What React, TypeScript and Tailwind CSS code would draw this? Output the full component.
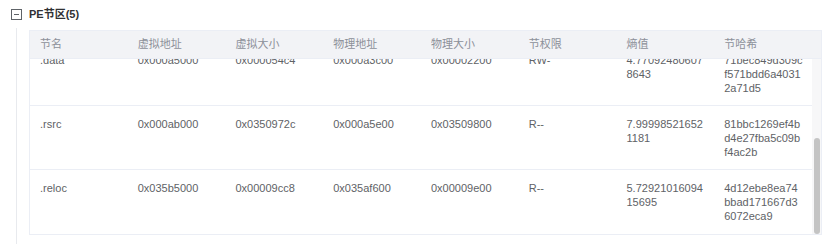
import { useLayoutEffect, useRef } from "react";

type Section = {
  name: string;
  vaddr: string;
  vsize: string;
  paddr: string;
  psize: string;
  perm: string;
  entropy: string;
  hash: string;
};

const columns = ["节名", "虚拟地址", "虚拟大小", "物理地址", "物理大小", "节权限", "熵值", "节哈希"];

const sections: Section[] = [
  {
    name: ".text",
    vaddr: "0x00001000",
    vsize: "0x0008b2f6",
    paddr: "0x00000400",
    psize: "0x0008b400",
    perm: "R-X",
    entropy: "6.48213570921",
    hash: "3e9c0a7f12bd45e8c6a01f9d27b3c8e4",
  },
  {
    name: ".rdata",
    vaddr: "0x0008d000",
    vsize: "0x00017a3e",
    paddr: "0x0008b800",
    psize: "0x00017c00",
    perm: "R--",
    entropy: "5.10384726153",
    hash: "a0d7e15c93f24b6812ce7f90d4b5a1c3",
  },
  {
    name: ".data",
    vaddr: "0x000a5000",
    vsize: "0x000054c4",
    paddr: "0x000a3c00",
    psize: "0x00002200",
    perm: "RW-",
    entropy: "4.770924806078643",
    hash: "71bec849d309cf571bdd6a40312a71d5",
  },
  {
    name: ".rsrc",
    vaddr: "0x000ab000",
    vsize: "0x0350972c",
    paddr: "0x000a5e00",
    psize: "0x03509800",
    perm: "R--",
    entropy: "7.999985216521181",
    hash: "81bbc1269ef4bd4e27fba5c09bf4ac2b",
  },
  {
    name: ".reloc",
    vaddr: "0x035b5000",
    vsize: "0x00009cc8",
    paddr: "0x035af600",
    psize: "0x00009e00",
    perm: "R--",
    entropy: "5.7292101609415695",
    hash: "4d12ebe8ea74bbad171667d36072eca9",
  },
];

function CollapseIcon() {
  return (
    <span className="flex h-[11px] w-[11px] items-center justify-center border border-[#5f6368] bg-white">
      <span className="h-px w-[5px] bg-[#5f6368]" />
    </span>
  );
}

function Cell({ children }: { children: string }) {
  return <div className="break-all pl-[10px] pr-[9px]">{children}</div>;
}

export default function App() {
  const bodyRef = useRef<HTMLDivElement>(null);

  // table body is shown scrolled to the end
  useLayoutEffect(() => {
    if (bodyRef.current) bodyRef.current.scrollTop = bodyRef.current.scrollHeight;
  }, []);

  return (
    <div
      className="h-[244px] w-[830px] overflow-hidden bg-white"
      style={{ fontFamily: '"Liberation Sans", "Noto Sans CJK SC", sans-serif' }}
    >
      {/* Title */}
      <div className="flex h-[28px] items-center pl-[11px]">
        <CollapseIcon />
        <span className="ml-[7px] text-[11px] font-bold text-[#303133]">PE节区(5)</span>
      </div>

      {/* Tree line + table */}
      <div className="ml-[16px] h-[216px] border-l border-[#e8eaee] pl-[12px] pt-[2px]">
        <div className="w-[793px] border border-[#ebeef5] text-[11px]">
          {/* Header */}
          <div className="flex h-[28px] border-b border-[#ebeef5] bg-[#f2f3f6] text-[#8c9099]">
            <div className="grid w-[782px] grid-cols-8 items-center">
              {columns.map((c) => (
                <div key={c} className="pl-[10px]">
                  {c}
                </div>
              ))}
            </div>
          </div>

          {/* Body */}
          <div className="flex h-[175px]">
            <div ref={bodyRef} className="w-[782px] overflow-hidden text-[#606266]">
              {sections.map((s, i) => (
                <div
                  key={s.name}
                  className={`grid h-[64px] grid-cols-8 items-start pt-[11px] leading-[14px] ${
                    i < sections.length - 1 ? "border-b border-[#ebeef5]" : ""
                  }`}
                >
                  <Cell>{s.name}</Cell>
                  <Cell>{s.vaddr}</Cell>
                  <Cell>{s.vsize}</Cell>
                  <Cell>{s.paddr}</Cell>
                  <Cell>{s.psize}</Cell>
                  <Cell>{s.perm}</Cell>
                  <Cell>{s.entropy}</Cell>
                  <Cell>{s.hash}</Cell>
                </div>
              ))}
            </div>

            {/* Scrollbar */}
            <div className="flex w-[9px] flex-col justify-end bg-[#f7f7f8] pl-[2px]">
              <div className="h-[96px] w-[6px] rounded-[3px] bg-[#c4c4c4]" />
            </div>
          </div>
        </div>
      </div>
    </div>
  );
}
